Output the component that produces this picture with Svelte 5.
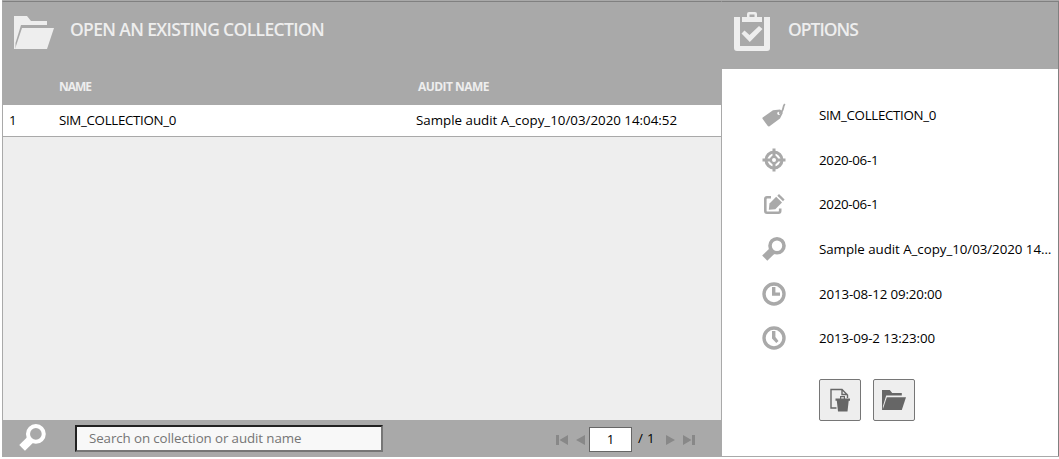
<script>
    let page = $state(1);
    let search = $state('');

    const collections = [
        { id: 1, name: 'SIM_COLLECTION_0', audit: 'Sample audit A_copy_10/03/2020 14:04:52' }
    ];

    const details = [
        { icon: 'tag', text: 'SIM_COLLECTION_0', spacing: -0.33 },
        { icon: 'target', text: '2020-06-1', spacing: -0.3 },
        { icon: 'edit', text: '2020-06-1', spacing: -0.3 },
        { icon: 'search', text: 'Sample audit A_copy_10/03/2020 14:04:52', spacing: -0.05 },
        { icon: 'start', text: '2013-08-12 09:20:00', spacing: -0.14 },
        { icon: 'end', text: '2013-09-2 13:23:00', spacing: -0.12 }
    ];
</script>

{#snippet folder()}
    <svg class="folder" viewBox="0 0 40 33">
        <path d="M0 0H13L17 5H33V9H7L1.5 27V33H0Z" />
        <path d="M8 12H40L33 33H1Z" />
    </svg>
{/snippet}

{#snippet magnifier()}
    <svg class="magnifier" viewBox="0 0 24 24">
        <circle cx="15" cy="8.8" r="7" fill="none" stroke="currentColor" stroke-width="3.6" />
        <path d="M7.2 11.8L12.3 16.9L5.3 23.8L0.2 18.6Z" />
    </svg>
{/snippet}

<div class="dialog">
    <section class="collections">
        <header class="title">
            {@render folder()}
            <h2>OPEN AN EXISTING COLLECTION</h2>
        </header>
        <div class="columns">
            <span class="col-id"></span>
            <span class="col-name">NAME</span>
            <span class="col-audit">AUDIT NAME</span>
        </div>
        <div class="grid-body">
            {#each collections as row}
                <div class="grid-row">
                    <span class="col-id">{row.id}</span>
                    <span class="col-name">{row.name}</span>
                    <span class="col-audit">{row.audit}</span>
                </div>
            {/each}
        </div>
        <footer>
            {@render magnifier()}
            <input class="search" type="text" placeholder="Search on collection or audit name" bind:value={search} />
            <div class="pager">
                <svg width="12" height="12" viewBox="0 0 12 12"><path d="M0 1H3V11H0ZM12 1V11L3.5 6Z" /></svg>
                <svg width="9" height="12" viewBox="0 0 9 12"><path d="M9 1V11L0 6Z" /></svg>
                <input class="page" type="text" bind:value={page} />
                <span class="total">/ 1</span>
                <svg width="9" height="12" viewBox="0 0 9 12"><path d="M0 1V11L9 6Z" /></svg>
                <svg width="12" height="12" viewBox="0 0 12 12"><path d="M0 1V11L8.5 6ZM9 1H12V11H9Z" /></svg>
            </div>
        </footer>
    </section>

    <section class="options">
        <header class="title">
            <svg class="clipboard" viewBox="0 0 36 40">
                <path d="M0 5H6V34H30V5H36V36Q36 39 33 39H3Q0 39 0 36Z" />
                <path fill-rule="evenodd" d="M8 5H13V2Q13 0 15 0H21Q23 0 23 2V5H28V10H8ZM15.5 2.5V5H20.5V2.5Z" />
                <path d="M7.5 21.5L10.5 18.5L15.5 23L25 14L28.5 17L15.8 30Z" />
            </svg>
            <h2>OPTIONS</h2>
        </header>
        <ul>
            {#each details as item}
                <li>
                    {#if item.icon === 'search'}
                        {@render magnifier()}
                    {:else}
                        <svg width="24" height="24" viewBox="0 0 24 24">
                            {#if item.icon === 'tag'}
                                <path fill-rule="evenodd" d="M0.7 14.5L11 7.2L18 6.5Q20.5 7.5 20.8 10L18 15.5L7.2 23.5Q6.2 23.7 5.6 22.8L0.5 15.8Q0.2 15 0.7 14.5ZM16.8 8.7A1.6 1.6 0 1 0 16.8 11.9A1.6 1.6 0 1 0 16.8 8.7Z" />
                                <path d="M17 10.3C23 8.5 19.8 4.5 22.8 1" fill="none" stroke="currentColor" stroke-width="1.8" />
                            {:else if item.icon === 'target'}
                                <g fill="none" stroke="currentColor">
                                    <circle cx="12" cy="12" r="8" stroke-width="3" />
                                    <circle cx="12" cy="12" r="3.2" stroke-width="2.4" />
                                    <path d="M12 0.5V9M12 15V23.5M0.5 12H9M15 12H23.5" stroke-width="3" />
                                </g>
                            {:else if item.icon === 'edit'}
                                <path d="M9 5.3H5Q3.3 5.3 3.3 7V19Q3.3 20.7 5 20.7H16.5Q18.2 20.7 18.2 19V16.5" fill="none" stroke="currentColor" stroke-width="2.6" />
                                <path d="M6.8 17.8L7.5 11.5L14.2 4.8L20 10.6L13.3 17.2Z" />
                                <path d="M15.3 3.7L17 2L22.6 7.6L21 9.3Z" />
                            {:else}
                                <circle cx="12" cy="12" r="10" fill="none" stroke="currentColor" stroke-width="3.4" />
                                {#if item.icon === 'start'}
                                    <path d="M10 5H13.4V10.5H18V13.8H10Z" />
                                {:else}
                                    <path d="M10 5H13.4V11L16.5 15L14.3 17L10 12.5Z" />
                                {/if}
                            {/if}
                        </svg>
                    {/if}
                    <span style="letter-spacing: {item.spacing}px">{item.text}</span>
                </li>
            {/each}
        </ul>
        <div class="actions">
            <button aria-label="Delete collection">
                <svg width="20" height="24" viewBox="0 0 20 24">
                    <path d="M6.5 20H1V1.5H12L17.5 7V10M12 1.5V6.5H17.5" fill="none" stroke="currentColor" stroke-width="1.4" />
                    <path fill-rule="evenodd" d="M5.5 10.5H10V8H15V10.5H20V12.8H18.7L17.5 23.5H8L6.8 12.8H5.5ZM11.2 9.2V10.5H13.8V9.2Z" />
                </svg>
            </button>
            <button aria-label="Open collection">{@render folder()}</button>
        </div>
    </section>
</div>

<style>
    :global(body) {
        background: #fff;
    }
    .dialog {
        box-sizing: border-box;
        display: flex;
        width: 1057px;
        height: 457px;
        margin-left: 2px;
        border-top: 1px solid #a9a9a9;
        border-bottom: 1px solid #a9a9a9;
        font-family: "Trebuchet MS", "Open Sans", sans-serif;
        font-size: 13.33px;
        color: #000;
    }
    section {
        box-sizing: border-box;
        display: flex;
        flex-direction: column;
        border-top: 1px solid #808080;
    }
    svg {
        display: block;
        flex-shrink: 0;
        fill: currentColor;
    }
    .collections {
        width: 720px;
        border-left: 1px solid #a9a9a9;
        border-right: 1px solid #a9a9a9;
        background: #eee;
    }
    .title {
        display: flex;
        box-sizing: border-box;
        height: 67px;
        flex-shrink: 0;
        background: #a9a9a9;
        color: #eee;
    }
    h2 {
        margin: 0;
        font-size: 17.5px;
        line-height: 24px;
        font-weight: 600;
        white-space: nowrap;
    }
    .folder {
        width: 40px;
        height: 33px;
    }
    .collections .title {
        padding: 14px 0 0 11px;
        gap: 16px;
    }
    .collections h2 {
        margin-top: 1px;
        letter-spacing: -0.65px;
    }
    .columns,
    .grid-row {
        box-sizing: border-box;
        display: flex;
        align-items: center;
        padding-bottom: 2px;
    }
    .columns {
        height: 36px;
        flex-shrink: 0;
        background: #a9a9a9;
        color: #eee;
        font-size: 12px;
        font-weight: 700;
    }
    .grid-row {
        height: 32px;
        background: #fff;
        border-bottom: 1px solid #a9a9a9;
    }
    .col-id {
        box-sizing: border-box;
        width: 56px;
        padding-left: 6px;
    }
    .col-name {
        width: 357px;
        letter-spacing: -0.33px;
    }
    .columns .col-name {
        width: 359px;
        letter-spacing: -1px;
    }
    .columns .col-audit {
        letter-spacing: -0.55px;
    }
    .grid-body {
        flex: 1;
    }
    footer {
        display: flex;
        align-items: center;
        height: 36px;
        background: #a9a9a9;
    }
    footer .magnifier {
        width: 27px;
        height: 27px;
        margin: 0 29px 2px 16px;
        color: #fff;
    }
    input {
        box-sizing: border-box;
        font-family: inherit;
        font-size: 13.33px;
        color: #000;
    }
    .search {
        width: 308px;
        height: 27px;
        padding: 0 12px;
        border: 2px inset #767676;
        background: #f8f8f8;
        letter-spacing: -0.1px;
    }
    .search::placeholder {
        color: #757575;
    }
    .pager {
        display: flex;
        align-items: center;
        margin: 3px 0 0 173px;
        color: #000;
    }
    .pager svg {
        color: #888;
    }
    .pager svg + svg {
        margin-left: 8px;
    }
    .page {
        width: 43px;
        height: 25px;
        margin-left: 4px;
        padding: 0 0 1px;
        border: 1px solid #666;
        background: #fff;
        text-align: center;
    }
    .total {
        margin: 0 11px 3px 6px;
        letter-spacing: 0.3px;
    }
    .options {
        width: 337px;
        border-right: 1px solid #808080;
        background: #fff;
    }
    .options .title {
        padding: 10px 0 0 12px;
        gap: 18px;
    }
    .options h2 {
        margin-top: 5px;
        letter-spacing: -1px;
    }
    .clipboard {
        width: 36px;
        height: 40px;
    }
    ul {
        margin: 24px 0 0;
        padding: 0 0 0 40px;
        list-style: none;
        color: #000;
    }
    li {
        display: flex;
        align-items: center;
        height: 44.6px;
        gap: 33px;
    }
    li svg {
        color: #a9a9a9;
    }
    li .magnifier {
        width: 24px;
        height: 24px;
    }
    li span {
        width: 233px;
        overflow: hidden;
        text-overflow: ellipsis;
        white-space: nowrap;
    }
    .actions {
        display: flex;
        gap: 12px;
        margin: 18px 0 0 97px;
    }
    button {
        display: flex;
        align-items: center;
        justify-content: center;
        box-sizing: border-box;
        width: 42px;
        height: 42px;
        padding: 0;
        border: 1px solid #767676;
        border-radius: 2px;
        background: #eee;
        color: #666;
        cursor: pointer;
    }
    button .folder {
        width: 24px;
        height: 20px;
    }
</style>
